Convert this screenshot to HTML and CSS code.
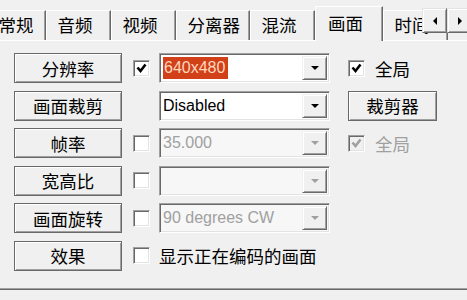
FILE: index.html
```html
<!doctype html>
<html>
 <head>
	<meta charset="UTF-8">
	<meta name="viewport" content="width=device-width, initial-scale=1.0">
	<title> 画面 </title>
	<link rel="stylesheet" href="styles.css">
 </head>
<body>

	<div class="tabbar">
		<div class="tab first">常规</div>
		<div class="tab">音频</div>
		<div class="tab">视频</div>
		<div class="tab">分离器</div>
		<div class="tab">混流</div>
		<div class="tab active">画面</div>
		<div class="tab">时间</div>
		<div class="scroller">
			<span class="arrow-btn"><i class="tri-left"></i></span>
			<span class="arrow-btn"><i class="tri-right"></i></span>
		</div>
	</div>

	<div class="panel">
		<div class="row">
			<span class="btn">分辨率</span>
			<span class="check on"><svg viewBox="0 0 11 11"><polyline points="1.5,4.5 4.5,8 9.5,1.5"/></svg></span>
			<div class="combo">
				<span class="value"><span class="sel">640x480</span></span>
				<span class="drop"><i></i></span>
			</div>
			<div class="opt">
				<span class="check on"><svg viewBox="0 0 11 11"><polyline points="1.5,4.5 4.5,8 9.5,1.5"/></svg></span>
				<span>全局</span>
			</div>
		</div>

		<div class="row">
			<span class="btn">画面裁剪</span>
			<span class="check none"></span>
			<div class="combo">
				<span class="value">Disabled</span>
				<span class="drop"><i></i></span>
			</div>
			<span class="btn small">裁剪器</span>
		</div>

		<div class="row">
			<span class="btn">帧率</span>
			<span class="check"></span>
			<div class="combo disabled">
				<span class="value">35.000</span>
				<span class="drop"><i></i></span>
			</div>
			<div class="opt disabled">
				<span class="check on"><svg viewBox="0 0 11 11"><polyline points="1.5,4.5 4.5,8 9.5,1.5"/></svg></span>
				<span>全局</span>
			</div>
		</div>

		<div class="row">
			<span class="btn">宽高比</span>
			<span class="check"></span>
			<div class="combo disabled">
				<span class="value"></span>
				<span class="drop"><i></i></span>
			</div>
		</div>

		<div class="row">
			<span class="btn">画面旋转</span>
			<span class="check"></span>
			<div class="combo disabled">
				<span class="value">90 degrees CW</span>
				<span class="drop"><i></i></span>
			</div>
		</div>

		<div class="row">
			<span class="btn">效果</span>
			<span class="check"></span>
			<span class="label">显示正在编码的画面</span>
		</div>
	</div>

</body>
</html>
```

FILE: styles.css
```css
* {
	box-sizing: border-box;
}

body {
	margin: 0;
	padding: 0;
	width: 467px;
	height: 300px;
	overflow: hidden;
	background-color: #f0f0f0;
	font-family: "Noto Sans CJK SC", "Noto Sans", sans-serif;
	font-size: 17.5px;
	color: #000;
}

/* tabs */
.tabbar {
	position: relative;
	display: flex;
	align-items: flex-end;
	height: 40px;
}

.tab {
	height: 30px;
	min-width: 65px;
	padding: 0 9px 0 10.5px;
	line-height: 28px;
	white-space: nowrap;
	border-top: 1px solid #fff;
	border-left: 1px solid #fff;
	border-right: 1px solid #696969;
	box-shadow: inset -1px 0 #a0a0a0;
}

.tab.first {
	min-width: 59px;
	margin-left: -13px;
}

.tab.active {
	position: relative;
	z-index: 1;
	height: 35px;
	min-width: 68px;
	margin-bottom: -1px;
	padding-left: 12px;
	line-height: 32px;
	background-color: #f0f0f0;
}

.scroller {
	position: absolute;
	top: 8px;
	left: 422px;
	display: flex;
	z-index: 2;
}

.arrow-btn {
	display: flex;
	align-items: center;
	justify-content: center;
	width: 25px;
	height: 25px;
	background-color: #f0f0f0;
	border: 1px solid;
	border-color: #e3e3e3 #696969 #696969 #e3e3e3;
	box-shadow: inset 1px 1px #fff, inset -1px -1px #a0a0a0;
}

.tri-left {
	border-top: 4px solid transparent;
	border-bottom: 4px solid transparent;
	border-right: 4px solid #000;
}

.tri-right {
	border-top: 4px solid transparent;
	border-bottom: 4px solid transparent;
	border-left: 4px solid #000;
}

/* panel */
.panel {
	display: flex;
	flex-direction: column;
	gap: 7.6px;
	height: 250px;
	padding: 12px 0 0 14px;
	border-top: 1px solid #fff;
	border-bottom: 1px solid #696969;
	box-shadow: inset 0 -1px #a0a0a0;
}

.row {
	display: flex;
	align-items: center;
	height: 30px;
}

.btn {
	display: flex;
	align-items: center;
	justify-content: center;
	width: 108px;
	height: 30px;
	margin-right: 11px;
	background-color: #f0f0f0;
	border: 1px solid #696969;
	box-shadow: inset 1px 1px #fff, inset -1px -1px #a0a0a0;
	white-space: nowrap;
}

.btn.small {
	width: 89px;
	margin-right: 0;
}

.check {
	display: flex;
	align-items: center;
	justify-content: center;
	width: 17px;
	height: 17px;
	margin-right: 9px;
	background-color: #fff;
	border: 1px solid;
	border-color: #a0a0a0 #fff #fff #a0a0a0;
	box-shadow: inset 1px 1px #696969, inset -1px -1px #e3e3e3;
}

.check.none {
	visibility: hidden;
}

.check svg {
	width: 11px;
	height: 11px;
	fill: none;
	stroke: #000;
	stroke-width: 2.6;
}

.combo {
	display: flex;
	align-items: stretch;
	width: 171px;
	height: 30px;
	margin-right: 18px;
	padding: 2px;
	background-color: #fff;
	border: 1px solid;
	border-color: #a0a0a0 #fff #fff #a0a0a0;
	box-shadow: inset 1px 1px #696969, inset -1px -1px #e3e3e3;
	font-family: "Liberation Sans", Arial, sans-serif;
	font-size: 16px;
}

.combo .value {
	flex: 1;
	display: flex;
	align-items: center;
	padding-left: 1px;
	white-space: nowrap;
	overflow: hidden;
}

.combo .sel {
	line-height: 22px;
	padding: 0 3px 0 1px;
	background-color: #d2401a;
	color: #ffd8bc;
}

.drop {
	display: flex;
	align-items: center;
	justify-content: center;
	width: 25px;
	background-color: #f0f0f0;
	border: 1px solid;
	border-color: #f0f0f0 #696969 #696969 #f0f0f0;
	box-shadow: inset 1px 1px #fff, inset -1px -1px #a0a0a0;
}

.drop i {
	border-left: 4px solid transparent;
	border-right: 4px solid transparent;
	border-top: 4px solid #000;
}

.combo.disabled {
	background-color: #f7f7f7;
	color: #a0a0a0;
}

.combo.disabled .drop i {
	border-top-color: #a0a0a0;
}

.opt {
	display: flex;
	align-items: center;
}

.opt .check {
	margin-right: 10px;
}

.opt.disabled {
	color: #a0a0a0;
}

.opt.disabled .check {
	background-color: #f0f0f0;
}

.opt.disabled .check svg {
	stroke: #a0a0a0;
}

.label {
	white-space: nowrap;
}
```
